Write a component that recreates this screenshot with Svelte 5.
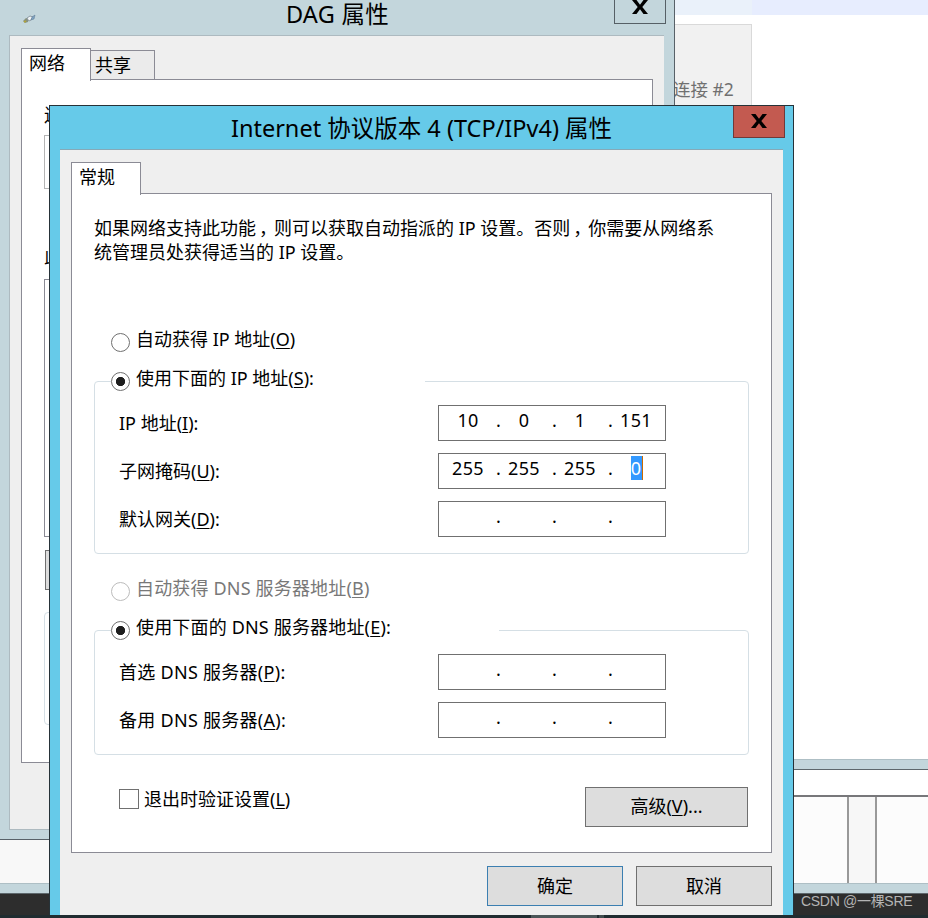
<script>
  const fieldsets = [
    {
      name: 'address',
      auto: { label: '自动获得 IP 地址', key: 'O', disabled: false },
      manual: { label: '使用下面的 IP 地址', key: 'S' },
      legendWidth: 314,
      fields: [
        { label: 'IP 地址', key: 'I', octets: ['10', '0', '1', '151'] },
        { label: '子网掩码', key: 'U', octets: ['255', '255', '255', '0'], selected: 3 },
        { label: '默认网关', key: 'D', octets: ['', '', '', ''] },
      ],
    },
    {
      name: 'dns',
      auto: { label: '自动获得 DNS 服务器地址', key: 'B', disabled: true },
      manual: { label: '使用下面的 DNS 服务器地址', key: 'E' },
      legendWidth: 388,
      fields: [
        { label: '首选 DNS 服务器', key: 'P', octets: ['', '', '', ''] },
        { label: '备用 DNS 服务器', key: 'A', octets: ['', '', '', ''] },
      ],
    },
  ]
</script>

{#snippet cross()}
  <svg width="16" height="14" viewBox="0 0 16 14">
    <path d="M0 0h4.500l3.500 4.700L11.500 0H16l-5.700 7 5.700 7h-4.500L8 9.300 4.500 14H0l5.700-7z" />
  </svg>
{/snippet}

<div class="desktop">
  <div class="explorer">
    <div class="toolbar"></div>
    <div class="tile"><span>连接 #2</span></div>
  </div>

  <div class="lower">
    <div class="edge"></div>
    <div class="strip"></div>
    <div class="panes">
      <div class="pane first"></div>
      <div class="pane gutter"></div>
      <div class="pane"></div>
    </div>
    <div class="edge end"></div>
  </div>
  <div class="leftover">
    <div class="edge end"></div>
  </div>

  <div class="taskbar">
    <div class="task"></div>
    <div class="task small"></div>
  </div>

  <div class="win back">
    <div class="titlebar">
      <svg class="net" width="14" height="10" viewBox="0 0 14 10">
        <path d="M0 7l3-3 3 1-1 3-3 1z" fill="#87917f" />
        <path d="M1 8l2-1" stroke="#b3a43a" stroke-width="1.500" />
        <path d="M4 4l3-2 3 1-3 4-2-1z" fill="#eef3f5" stroke="#7c8996" stroke-width=".8" />
        <path d="M9 3l3-2-1 4-3 1z" fill="#7fa3c2" stroke="#5b7690" stroke-width=".5" />
      </svg>
      <h1>DAG 属性</h1>
      <div class="close">{@render cross()}</div>
    </div>
    <div class="client">
      <div class="tabs">
        <div class="tab active">网络</div>
        <div class="tab idle">共享</div>
      </div>
      <div class="page">
        <span class="clip">连接时使用</span>
        <div class="box adapter"></div>
        <span class="clip">此连接使用下列项目</span>
        <div class="box items"></div>
        <div class="box install"></div>
        <div class="box info"></div>
      </div>
    </div>
  </div>

  <div class="win front">
    <div class="titlebar">
      <h1>Internet 协议版本 4 (TCP/IPv4) 属性</h1>
      <div class="close">{@render cross()}</div>
    </div>
    <div class="client">
      <div class="tabs">
        <div class="tab active">常规</div>
      </div>
      <div class="page">
        <p>
          如果网络支持此功能<i>，</i>则可以获取自动指派的 IP 设置。否则<i>，</i>你需要从网络系<br
          />统管理员处获得适当的 IP 设置。
        </p>

        {#each fieldsets as set}
          <div class="set {set.name}">
            <div class="option" class:disabled={set.auto.disabled}>
              <span class="radio"></span>
              <span class="text">{set.auto.label}(<u>{set.auto.key}</u>)</span>
            </div>
            <div class="group">
              <div class="option legend" style="width: {set.legendWidth}px">
                <span class="radio on"></span>
                <span class="text">{set.manual.label}(<u>{set.manual.key}</u>):</span>
              </div>
              {#each set.fields as field}
                <div class="field">
                  <span class="text">{field.label}(<u>{field.key}</u>):</span>
                  <div class="ip">
                    {#each field.octets as octet, i}
                      <span class="octet"><span class:selected={field.selected === i}>{octet}</span></span>
                      {#if i < 3}<span class="dot">.</span>{/if}
                    {/each}
                  </div>
                </div>
              {/each}
            </div>
          </div>
        {/each}

        <div class="bottom">
          <span class="check"></span>
          <span class="text">退出时验证设置(<u>L</u>)</span>
          <div class="button advanced">高级(<u>V</u>)...</div>
        </div>
      </div>
      <div class="actions">
        <div class="button default">确定</div>
        <div class="button">取消</div>
      </div>
    </div>
  </div>

  <div class="watermark">CSDN @一棵SRE</div>
</div>

<style>
  :global(body) {
    margin: 0;
  }
  .desktop {
    position: relative;
    width: 928px;
    height: 918px;
    overflow: hidden;
    background: #fff;
    color: #000;
    font: 18px/24px 'Noto Sans', 'Noto Sans CJK SC', sans-serif;
    white-space: nowrap;
  }
  .desktop * {
    box-sizing: border-box;
  }
  u {
    text-decoration-thickness: 1px;
    text-underline-offset: 2px;
  }

  /* windows behind the dialogs */
  .explorer {
    height: 759px;
  }
  .toolbar {
    height: 15px;
    background: linear-gradient(90deg, #eaf1fa 752px, #e7edfe 752px);
  }
  .tile {
    width: 752px;
    height: 82px;
    margin-top: 9px;
    padding: 52px 0 0 672px;
    border: 1px solid #d9d9d9;
    background: #f1f1f1;
    color: #707070;
    font-size: 17.5px;
  }
  .edge {
    height: 11px;
    border-top: 1px solid #aebfc5;
    border-bottom: 1px solid #5d676c;
    background: #c3d6dc;
  }
  .lower {
    margin-left: 794px;
  }
  .strip {
    height: 25px;
  }
  .panes {
    display: flex;
    height: 88px;
    border-top: 2px solid #77777a;
  }
  .pane {
    flex: 1;
    background: #fcfcfc;
  }
  .first {
    flex: 0 0 55px;
    border-right: 2px solid #999;
  }
  .gutter {
    flex: 0 0 28px;
    border-right: 2px solid #999;
    background: #f7f7f7;
  }
  .leftover {
    position: absolute;
    left: 0;
    top: 840px;
    width: 50px;
    height: 54px;
    padding-top: 43px;
    background: #f8f8f8;
  }
  .taskbar {
    position: absolute;
    left: 0;
    top: 894px;
    width: 928px;
    height: 24px;
    display: flex;
    gap: 2px;
    padding: 21px 0 0 531px;
    background: linear-gradient(#2d2d2d 21px, #202c30 21px);
  }
  .task {
    width: 66px;
    background: #4b5658;
  }
  .task.small {
    width: 5px;
    background: #414c4e;
  }

  /* dialogs */
  .win {
    position: absolute;
    display: flex;
    flex-direction: column;
  }
  .titlebar {
    position: relative;
    flex: none;
  }
  h1 {
    margin: 0;
    font-size: 23.5px;
    font-weight: 400;
    line-height: 30px;
    text-align: center;
  }
  .close {
    position: absolute;
    top: 0;
    display: flex;
    justify-content: center;
    width: 52px;
    border: 1px solid #566066;
    border-top: 0;
  }
  .client {
    flex: 1;
    background: #efefef;
  }
  .tabs {
    display: flex;
    align-items: flex-end;
  }
  .tab {
    border: 1px solid #8b8b95;
    border-bottom: 0;
  }
  .tab.active {
    position: relative;
    width: 70px;
    height: 33px;
    margin-bottom: -2px;
    padding: 2px 0 0 7px;
    background: #fff;
  }
  .tab.idle {
    width: 64px;
    height: 29px;
    padding: 2px 0 0 4px;
    border-left: 0;
    background: #ebebeb;
  }
  .page {
    border: 1px solid #8b8b95;
    background: #fff;
  }

  .back {
    left: 0;
    top: 0;
    width: 675px;
    height: 840px;
    padding: 0 10px 9px 9px;
    border: solid #586168;
    border-width: 0 1px 1px 0;
    background: #c3d6dc;
  }
  .back .titlebar {
    height: 35px;
  }
  .back h1 {
    padding-left: 2px;
    line-height: 28px;
    letter-spacing: 0.3px;
  }
  .back .close {
    right: -2px;
    height: 24px;
  }
  .net {
    position: absolute;
    left: 14px;
    top: 14px;
  }
  .back .client {
    padding: 12px 11px 0;
    border: solid #adbac0;
    border-width: 1px 0 1px 1px;
  }
  .back .page {
    height: 684px;
    padding-left: 22px;
    overflow: hidden;
  }
  .clip {
    display: block;
    height: 24px;
    margin-top: 23px;
  }
  .clip + .box + .clip {
    margin-top: 55px;
  }
  .box {
    width: 500px;
    border: 1px solid #8b8b95;
  }
  .adapter {
    height: 54px;
    margin-top: 8px;
    border-color: #b4b4b4;
  }
  .items {
    height: 258px;
    margin-top: 11px;
  }
  .install {
    height: 40px;
    margin: 13px 0 0 1px;
    border-color: #707070;
    background: #ddd;
  }
  .info {
    height: 113px;
    margin-top: 22px;
    border-color: #d5dfe5;
    border-radius: 4px;
  }

  .front {
    left: 49px;
    top: 105px;
    width: 745px;
    height: 810px;
    padding: 0 10px;
    border: 1px solid #263238;
    border-bottom: 0;
    background: #66cae9;
  }
  .front .titlebar {
    height: 43px;
  }
  .front h1 {
    padding-top: 7px;
  }
  .front .close {
    right: -2px;
    height: 32px;
    padding-top: 8px;
    border-color: #6f3a3a;
    background: #c35a50;
  }
  .front .client {
    padding: 12px 11px 0;
    border-top: 1px solid #86a9b7;
  }
  .front .page {
    height: 660px;
    padding: 22px 22px 0;
  }
  p {
    margin: 0 0 64px;
  }
  p i {
    margin-right: -3px;
    padding-left: 3px;
    font-style: normal;
  }
  .option {
    display: flex;
    gap: 6px;
    height: 24px;
    margin-left: 17px;
    line-height: 22px;
  }
  .radio {
    flex: none;
    width: 19px;
    height: 19px;
    margin-top: 5px;
    border: 1px solid #707070;
    border-radius: 50%;
    background: #fff;
  }
  .radio.on {
    background: radial-gradient(circle, #1e1e1e 4.300px, #fff 5px);
  }
  .disabled {
    color: #787878;
  }
  .disabled .radio {
    border-color: #bcbcbc;
  }
  .dns .option {
    letter-spacing: 0.17px;
  }
  .dns .field > .text {
    letter-spacing: 0.28px;
  }
  .group {
    width: 655px;
    margin: 29px 0 23px;
    padding-bottom: 16px;
    border: 1px solid #d5dfe5;
    border-radius: 4px;
  }
  .legend {
    margin: -15px 0 14px 16px;
    background: #fff;
  }
  .field {
    display: flex;
    justify-content: space-between;
    height: 36px;
    padding: 0 82px 0 24px;
    line-height: 36px;
  }
  .field + .field {
    margin-top: 12px;
  }
  .ip {
    display: flex;
    width: 228px;
    padding: 2px 0 0 1px;
    border: 1px solid #707070;
    line-height: 24px;
  }
  .octet {
    width: 56px;
    text-align: center;
    letter-spacing: 0.3px;
  }
  .dot {
    width: 0;
  }
  .selected {
    display: inline-block;
    width: 12px;
    height: 24px;
    margin-left: 1px;
    border-right: 1px solid #cc6a00;
    background: #3399ff;
    color: #fff;
  }
  .bottom {
    display: flex;
    align-items: flex-start;
    margin-top: 31px;
    padding-left: 25px;
  }
  .check {
    width: 20px;
    height: 20px;
    margin: 3px 5px 0 0;
    border: 1px solid #707070;
  }
  .bottom .text {
    margin-top: 1px;
  }
  .button {
    width: 136px;
    height: 40px;
    border: 1px solid #707070;
    background: #ddd;
    line-height: 39px;
    text-align: center;
  }
  .advanced {
    width: 163px;
    margin: 1px 1px 0 auto;
    line-height: 37px;
  }
  .default {
    border-color: #3c7fb1;
  }
  .actions {
    display: flex;
    justify-content: flex-end;
    gap: 13px;
    padding-top: 13px;
  }
  .watermark {
    position: absolute;
    left: 801px;
    top: 889px;
    color: #b4b4b4;
    font: 14px/24px 'Liberation Sans', 'Noto Sans CJK SC', sans-serif;
    letter-spacing: -0.3px;
  }
</style>
